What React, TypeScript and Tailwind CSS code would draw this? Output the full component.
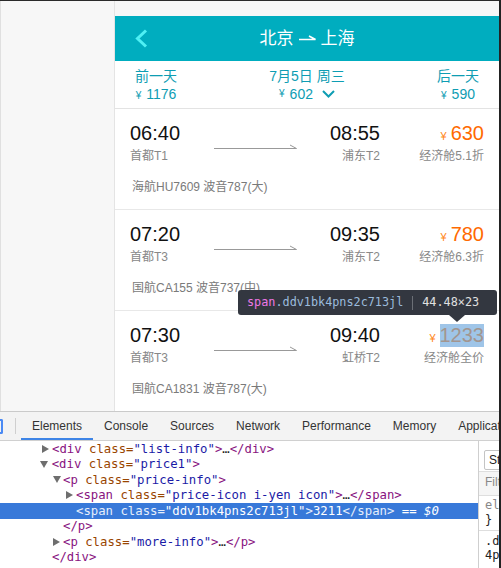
import React from "react";

const flights = [
  { dep: "06:40", from: "首都T1", arr: "08:55", to: "浦东T2", price: "630", rate: "经济舱5.1折", info: "海航HU7609 波音787(大)" },
  { dep: "07:20", from: "首都T3", arr: "09:35", to: "浦东T2", price: "780", rate: "经济舱6.3折", info: "国航CA155 波音737(中)" },
  { dep: "07:30", from: "首都T3", arr: "09:40", to: "虹桥T2", price: "1233", rate: "经济舱全价", info: "国航CA1831 波音787(大)", picked: true },
];

function Harpoon({ w, color, sw }: { w: number; color: string; sw: number }) {
  return (
    <svg width={w} height="8" viewBox={`0 0 ${w} 8`} className="block">
      <path d={`M0 5.5H${w - 0.5}L${w - 7} 2`} fill="none" stroke={color} strokeWidth={sw} />
    </svg>
  );
}

function FlightRow({ f }: { f: (typeof flights)[number] }) {
  return (
    <div className="h-[101px] shrink-0 border-b border-[#e8e8e8] bg-white px-[15px] pt-[13px]">
      <div className="flex">
        <div className="w-[84px]">
          <div className="text-[20px] leading-[23px] text-[#111]">{f.dep}</div>
          <div className="text-[12px] leading-[23px] text-[#888]">{f.from}</div>
        </div>
        <div className="w-[83px] pt-[21px]">
          <Harpoon w={83} color="#999" sw={1} />
        </div>
        <div className="w-[83px] text-right">
          <div className="text-[20px] leading-[23px] text-[#111]">{f.arr}</div>
          <div className="text-[12px] leading-[23px] text-[#888]">{f.to}</div>
        </div>
        <div className="flex-1 text-right">
          <div className="flex h-[23px] items-baseline justify-end">
            <span className="mr-[4px] text-[11px] text-[#ff8a1f]">¥</span>
            {f.picked ? (
              <span className="inline-block bg-[#9fc5e8] text-[20px] leading-[23px] text-[#a3958f]">{f.price}</span>
            ) : (
              <span className="text-[20px] leading-[23px] text-[#ff6a00]">{f.price}</span>
            )}
          </div>
          <div className="text-[12px] leading-[23px] text-[#888]">{f.rate}</div>
        </div>
      </div>
      <div className="mt-[8px] pl-[2px] text-[12px] leading-[23px] text-[#7a7a7a]">{f.info}</div>
    </div>
  );
}

function Tri({ open, color = "#6e6e6e" }: { open?: boolean; color?: string }) {
  return open ? (
    <svg width="8" height="7" viewBox="0 0 8 7" className="block">
      <path d="M0 0H8L4 7Z" fill={color} />
    </svg>
  ) : (
    <svg width="7" height="8" viewBox="0 0 7 8" className="block">
      <path d="M0 0L7 4L0 8Z" fill={color} />
    </svg>
  );
}

const P = ({ children }: { children: React.ReactNode }) => <span className="text-[#881280]">{children}</span>;
const N = ({ children }: { children: React.ReactNode }) => <span className="text-[#994500]">{children}</span>;
const V = ({ children }: { children: React.ReactNode }) => <span className="text-[#1a1aa6]">{children}</span>;

function Line({ pl, tri, children, selected }: { pl: string; tri?: "open" | "closed"; children: React.ReactNode; selected?: boolean }) {
  return (
    <div className={`flex h-[15.5px] items-center whitespace-nowrap ${pl} ${selected ? "bg-[#3879d9] text-white" : "text-[#222]"}`}>
      <div className="flex w-[10px] shrink-0 items-center">
        {tri === "open" && <Tri open />}
        {tri === "closed" && <Tri />}
      </div>
      <span>{children}</span>
    </div>
  );
}

export default function App() {
  const tabs = ["Elements", "Console", "Sources", "Network", "Performance", "Memory", "Application"];
  return (
    <div className="relative flex h-[568px] w-[501px] flex-col overflow-hidden border-r-2 border-[#222] bg-white font-['Liberation_Sans','Noto_Sans_CJK_SC',sans-serif]">
      {/* page viewport */}
      <div className="flex h-[411px] shrink-0 border-t border-[#2a2a2a] bg-[#f7f7f7]">
        <div className="w-[115px] shrink-0 border-x border-l-[#e0e0e0] border-r-[#e4e4e4]" />
        <div className="flex flex-1 flex-col overflow-hidden pt-[15px]">
          <div className="grid h-[45px] shrink-0 grid-cols-[1fr_auto_1fr] items-center bg-[#00adbf]">
            <div className="pl-[20px]">
              <svg width="13" height="19" viewBox="0 0 13 19" className="block">
                <path d="M11 1.5L2.5 9.5L11 17.5" fill="none" stroke="#4ff0f4" strokeWidth="3" />
              </svg>
            </div>
            <div className="flex items-center text-[17px] leading-[20px] text-white">
              <span>北京</span>
              <span className="mx-[5px] pb-[2px]">
                <Harpoon w={17} color="#fff" sw={1.6} />
              </span>
              <span>上海</span>
            </div>
            <div />
          </div>
          <div className="grid h-[48px] shrink-0 grid-cols-[1fr_auto_1fr] border-b border-[#e3e3e3] bg-white px-[20px] pt-[6px] text-[14px] leading-[18px] text-[#0e9db3]">
            <div className="justify-self-start text-center">
              <div>前一天</div>
              <div><span className="mr-[5px] text-[10px]">¥</span>1176</div>
            </div>
            <div className="text-center">
              <div>7月5日 周三</div>
              <div className="flex items-center justify-center">
                <span className="mr-[5px] text-[10px]">¥</span>602
                <svg width="13" height="8" viewBox="0 0 13 8" className="ml-[9px] block">
                  <path d="M1 1L6.5 6.5L12 1" fill="none" stroke="#0e9db3" strokeWidth="2" />
                </svg>
              </div>
            </div>
            <div className="justify-self-end text-center">
              <div>后一天</div>
              <div><span className="mr-[5px] text-[10px]">¥</span>590</div>
            </div>
          </div>
          {flights.map((f) => (
            <FlightRow key={f.dep} f={f} />
          ))}
        </div>
      </div>

      {/* devtools */}
      <div className="flex flex-1 flex-col border-t border-[#cacaca]">
        <div className="flex h-[29px] shrink-0 items-center overflow-hidden border-b border-[#d0d0d0] bg-[#f3f3f3] text-[12px] text-[#333]">
          <div className="h-[15px] w-[3px] shrink-0 rounded-r-[2px] border-y-2 border-r-2 border-[#4a8af4]" />
          <div className="ml-[12px] h-[16px] w-px shrink-0 bg-[#cfcfcf]" />
          <div className="ml-[5px] flex h-full">
            {tabs.map((t) => (
              <div
                key={t}
                className={`flex h-full shrink-0 items-center whitespace-nowrap px-[11px] ${t === "Elements" ? "border-b-2 border-[#3d84e6] pt-[2px]" : ""}`}
              >
                {t}
              </div>
            ))}
          </div>
        </div>
        <div className="flex flex-1 overflow-hidden">
          <div className="w-[478px] shrink-0 font-['DejaVu_Sans_Mono',monospace] text-[12.3px]">
            <Line pl="pl-[42px]" tri="closed">
              <P>&lt;div </P><N>class=</N><V>"list-info"</V><P>&gt;</P>…<P>&lt;/div&gt;</P>
            </Line>
            <Line pl="pl-[40px]" tri="open">
              <span className="ml-[1.7px]" />
              <P>&lt;div </P><N>class=</N><V>"price1"</V><P>&gt;</P>
            </Line>
            <Line pl="pl-[53px]" tri="open">
              <P>&lt;p </P><N>class=</N><V>"price-info"</V><P>&gt;</P>
            </Line>
            <Line pl="pl-[66px]" tri="closed">
              <P>&lt;span </P><N>class=</N><V>"price-icon i-yen icon"</V><P>&gt;</P>…<P>&lt;/span&gt;</P>
            </Line>
            <Line pl="pl-[66px]" selected>
              <span className="text-[#e6eefb]">&lt;span class=</span>"ddv1bk4pns2c713jl"<span className="text-[#e6eefb]">&gt;</span>3211<span className="text-[#e6eefb]">&lt;/span&gt;</span> == <span className="italic">$0</span>
            </Line>
            <Line pl="pl-[53px]">
              <P>&lt;/p&gt;</P>
            </Line>
            <Line pl="pl-[53px]" tri="closed">
              <P>&lt;p </P><N>class=</N><V>"more-info"</V><P>&gt;</P>…<P>&lt;/p&gt;</P>
            </Line>
            <Line pl="pl-[42px]">
              <P>&lt;/div&gt;</P>
            </Line>
            <Line pl="pl-[42px]">
              <P>&lt;div </P><N>class=</N><V>"list-info"</V><P>&gt;</P>
            </Line>
          </div>
          <div className="flex-1 overflow-hidden border-l border-[#cfcfcf] whitespace-nowrap">
            <div className="h-[31px] border-b border-[#dedede] bg-white pl-[5px] pt-[9px]">
              <div className="h-[20px] w-[60px] rounded-[2px] border border-[#c4c4c4] pl-[4px] text-[12px] leading-[18px] text-[#222]">Styles</div>
            </div>
            <div className="h-[24px] border-b border-[#dedede] bg-[#f5f5f5] pl-[6px] text-[12px] leading-[21px] text-[#888]">Filter</div>
            <div className="h-[35px] border-b border-[#dedede] pl-[6px] pt-[2px] font-['DejaVu_Sans_Mono',monospace] text-[12px] leading-[15px]">
              <div className="text-[#888]">element.style {"{"}</div>
              <div className="text-[#222]">{"}"}</div>
            </div>
            <div className="pl-[6px] pt-[3px] font-['DejaVu_Sans_Mono',monospace] text-[12px] leading-[14px] text-[#222]">
              <div>.ddv1bk</div>
              <div>4pns2c713jl {"{"}</div>
            </div>
          </div>
        </div>
      </div>

      {/* inspect tooltip */}
      <div className="absolute left-[238px] top-[290px] flex h-[25px] w-[259px] items-center rounded-[3px] bg-[#333740] pl-[9px] font-['DejaVu_Sans_Mono',monospace] text-[11.8px] whitespace-nowrap">
        <span className="text-[#ee78e6]">span</span>
        <span className="text-[#9bbbdc]">.ddv1bk4pns2c713jl</span>
        <span className="mx-[9px] h-[14px] w-px bg-[#6b6f76]" />
        <span className="text-[#e0e0e0]">44.48×23</span>
      </div>
      <div className="absolute left-[449px] top-[315px] h-0 w-0 border-x-[8px] border-t-[7px] border-x-transparent border-t-[#333740]" />
    </div>
  );
}
